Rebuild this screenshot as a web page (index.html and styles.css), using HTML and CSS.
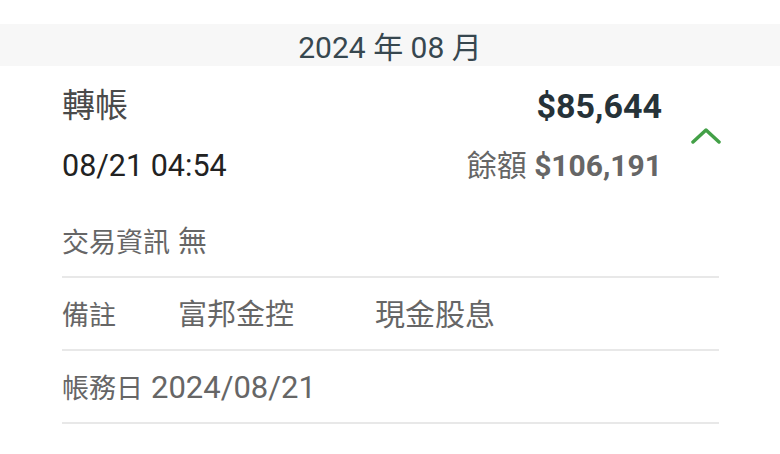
FILE: index.html
```html
<!DOCTYPE html>
<html lang="zh-Hant">
<head>
    <meta charset="UTF-8">
    <meta name="viewport" content="width=device-width, initial-scale=1.0">
    <title>交易明細</title>
    <link rel="stylesheet" href="styles.css">
</head>
<body>
    <div class="month-bar">2024 年 08 月</div>

    <!-- Transaction item (expanded) -->
    <div class="txn">
        <div class="txn-head">
            <div class="txn-main">
                <div class="txn-title">轉帳</div>
                <div class="txn-date">08/21 04:54</div>
            </div>
            <div class="txn-amounts">
                <div class="txn-amount">$85,644</div>
                <div class="txn-balance">餘額 <b>$106,191</b></div>
            </div>
            <div class="txn-toggle">
                <svg width="30" height="18" viewBox="0 0 30 18">
                    <polyline points="2,15 15,3 28,15" fill="none" stroke="#43a047" stroke-width="3.5" stroke-linecap="round" stroke-linejoin="round"/>
                </svg>
            </div>
        </div>

        <div class="detail-row first">
            <span class="label">交易資訊</span> <span class="value">無</span>
        </div>
        <div class="detail-row">
            <span class="label">備註</span>
            <span class="value memo">富邦金控</span>
            <span class="value memo-2">現金股息</span>
        </div>
        <div class="detail-row">
            <span class="label">帳務日</span> <span class="value num">2024/08/21</span>
        </div>
    </div>
</body>
</html>
```

FILE: styles.css
```css
body {
    margin: 0;
    background-color: #ffffff;
    font-family: Roboto, "Noto Sans CJK TC", sans-serif;
}

.month-bar {
    margin-top: 24px;
    height: 42px;
    background-color: #f7f7f7;
    display: flex;
    justify-content: center;
    align-items: center;
    font-size: 30px;
    color: #37474f;
}

.txn {
    padding-left: 62px;
    width: 657px;
}

.txn-head {
    display: flex;
    margin-top: 20px;
    margin-bottom: 36px;
}

.txn-main {
    flex: 1;
}

.txn-title {
    font-size: 33px;
    line-height: 40px;
    color: #4a4a4a;
}

.txn-date {
    margin-top: 20px;
    font-size: 30.5px;
    line-height: 40px;
    color: #222222;
}

.txn-amounts {
    text-align: right;
}

.txn-amount {
    font-size: 34px;
    line-height: 40px;
    font-weight: bold;
    color: #263238;
}

.txn-balance {
    margin-top: 20px;
    font-size: 30px;
    line-height: 40px;
    color: #666666;
}

.txn-toggle {
    width: 57px;
    display: flex;
    align-items: center;
    justify-content: flex-end;
}

.txn-toggle svg {
    display: block;
    margin-right: -2px;
}

.detail-row {
    height: 40px;
    padding: 17px 0 14px;
    line-height: 40px;
    border-bottom: 2px solid #e8e8e8;
    color: #666666;
    white-space: nowrap;
}

.detail-row.first {
    padding-top: 0;
}

.label {
    font-size: 27px;
}

.value {
    font-size: 29px;
    margin-left: 4px;
}

.value.num {
    font-size: 31px;
}

.memo {
    margin-left: 58px;
}

.memo-2 {
    margin-left: 77px;
    font-size: 30px;
}
```
